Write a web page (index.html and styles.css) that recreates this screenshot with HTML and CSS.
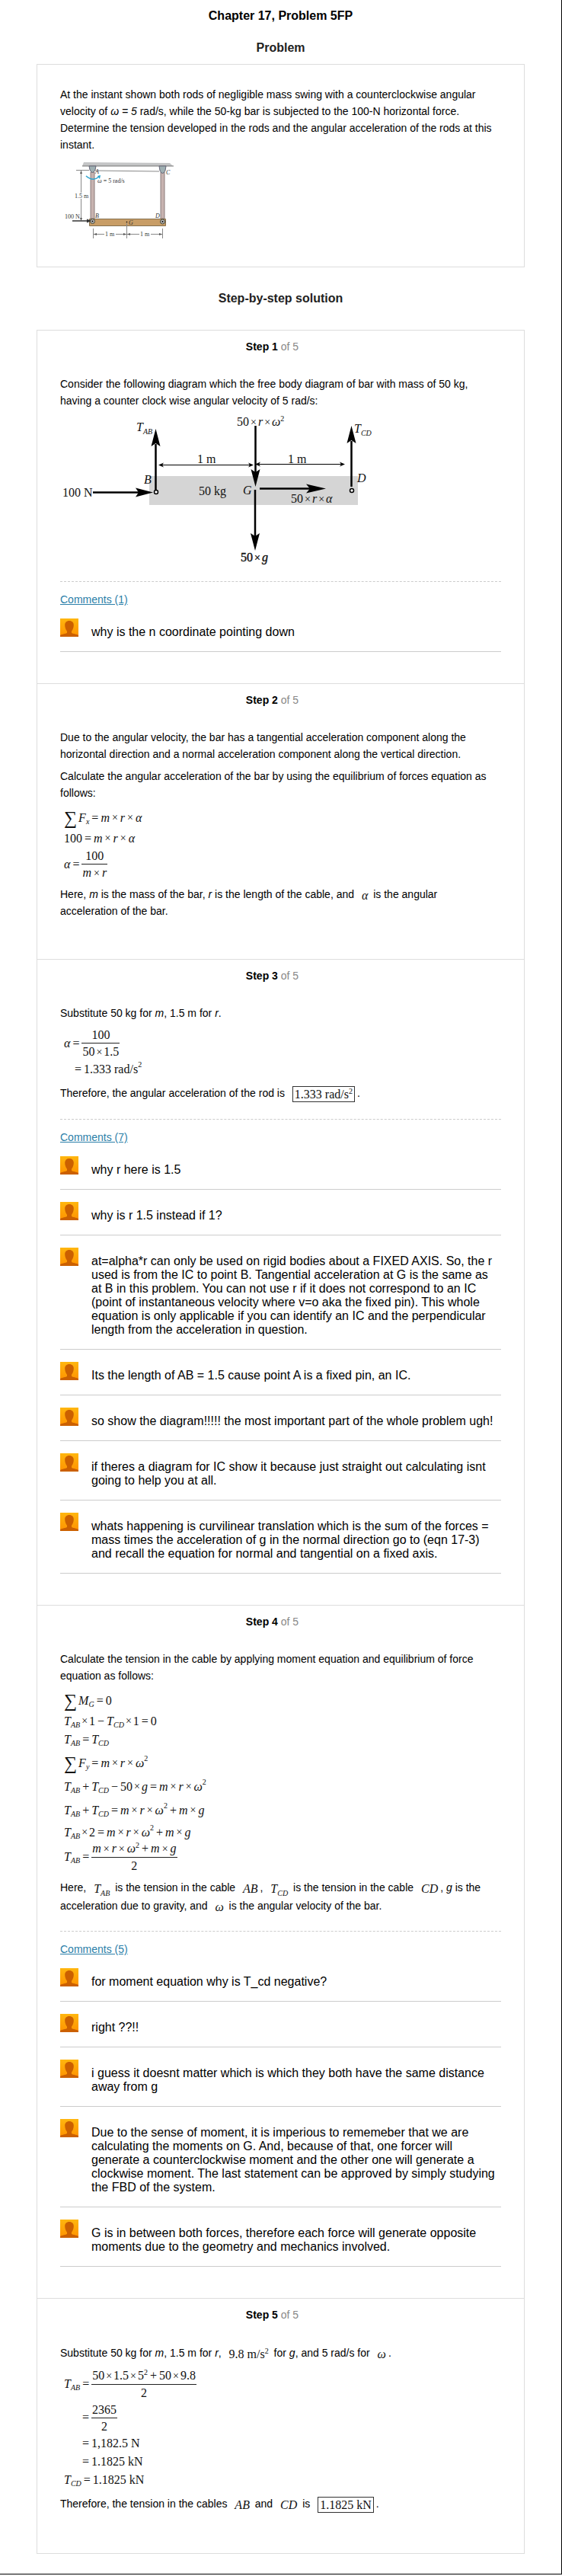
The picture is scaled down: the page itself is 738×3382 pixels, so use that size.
FILE: index.html
```html
<!DOCTYPE html>
<html lang="en">
<head>
<meta charset="utf-8">
<title>Chapter 17, Problem 5FP</title>
<link rel="stylesheet" href="styles.css">
</head>
<body>
<svg class="defs" aria-hidden="true">
  <defs>
    <linearGradient id="amber" x1="0" y1="0" x2="0" y2="1">
      <stop offset="0" stop-color="#ffb60f"/><stop offset="1" stop-color="#ff9200"/>
    </linearGradient>
    <symbol id="avatar" viewBox="0 0 24 24">
      <rect width="24" height="24" fill="url(#amber)"/>
      <path d="M12 3c3.6 0 5.8 2.200 5.800 5.800 0 3.200-1.300 6.200-2.800 7.900v2.200c1.300 1 6.500 1.600 9 3.100v2H0v-2c2.500-1.500 7.700-2.100 9-3.100v-2.200C7.500 15 6.200 12 6.200 8.800 6.200 5.200 8.400 3 12 3z" fill="#cb6000"/>
    </symbol>
  </defs>
</svg>
<main class="page">
  <h1 class="title">Chapter 17, Problem 5FP</h1>
  <h2 class="heading">Problem</h2>
  <section class="card problem">
    <p class="text">At the instant shown both rods of negligible mass swing with a counterclockwise angular velocity of <i>ω = 5</i> rad/s, while the 50-kg bar is subjected to the 100-N horizontal force. Determine the tension developed in the rods and the angular acceleration of the rods at this instant.</p>
    <svg class="figure" width="155" height="112" viewBox="79 208 155 112" role="img" aria-label="Bar BD hung from rods AB and CD">
      <path d="M110 213l113 1 4 4H108z" fill="#c4c5c6"/>
      <path d="M108 218h120" stroke="#777" stroke-width="1"/>
      <path d="M100 223.500h17M125 224l84 1" stroke="#888" fill="none"/>
      <path d="M119 226h5v61h-5zM211 226h5v61h-5z" fill="#c7b3b0" stroke="#8b7c7c"/>
      <path d="M117 218h9l-1 5q-3.500 7-7 0zM209 218h9l-1 6q-3.500 7-7 0z" fill="#9fb0b3" stroke="#667"/>
      <path d="M117.500 287.500h100v9h-100z" fill="#c89d66" stroke="#85704f"/>
      <circle cx="121.500" cy="290.500" r="3" fill="#bbb" stroke="#443"/><circle cx="121.500" cy="290.500" r="1"/>
      <circle cx="213.500" cy="291" r="3" fill="#bbb" stroke="#443"/><circle cx="213.500" cy="291" r="1"/>
      <path d="M113 231q9 8 17 1" stroke="#2ba3cf" stroke-width="1.500" fill="none"/>
      <path d="M128 231l4-1-1 5z" fill="#2ba3cf"/>
      <path d="M106.500 224v29M106.500 261v28M122.500 300v13M166.500 293v20M213.500 300v13M123 307.500h14M152 307.500h31M198 307.500h15" stroke="#888" fill="none"/>
      <path d="M106.500 224l-1.500 4h3zM106.500 290l-1.500-4h3zM123 307.500l4-1.500v3zM166 307.500l-4-1.500v3zM167 307.500l4-1.500v3zM213 307.500l-4-1.500v3z" fill="#555"/>
      <path d="M95 290h20" stroke="#333" stroke-width="1.500"/><path d="M114 287.500l6 2.500-6 2.500z" fill="#333"/>
      <circle cx="166.500" cy="291.500" r="0.800"/>
      <g class="tiny">
        <text x="98" y="260">1.5 m</text><text x="85" y="287">100 N</text>
        <text x="128" y="240"><tspan class="it">ω</tspan> = 5 rad/s</text>
        <text x="138" y="310">1 m</text><text x="184" y="310">1 m</text>
        <g class="it"><text x="125" y="228">A</text><text x="218" y="229">C</text><text x="125" y="286">B</text><text x="204" y="286">D</text><text x="169" y="295">G</text></g>
      </g>
    </svg>
  </section>

  <h2 class="heading solution">Step-by-step solution</h2>
  <div class="card steps">
    <section class="step">
      <h3 class="step-head">Step 1 <span class="of">of 5</span></h3>
      <p class="text">Consider the following diagram which the free body diagram of bar with mass of 50 kg, having a counter clock wise angular velocity of 5 rad/s:</p>
      <svg class="figure" width="430" height="198" viewBox="9 5 430 198" role="img" aria-label="Free body diagram of the bar">
        <path d="M126 86h274v38H126z" fill="#d5d5d5"/>
        <path d="M134.500 44v60M265.500 20v62M391.500 40v60M265 104v62" stroke="#000" stroke-width="2.500"/>
        <path d="M52 107.500h62M271 102.500h68" stroke="#000" stroke-width="2.500"/>
        <path d="M134.500 24l6 23-6-4-6 4zM391.500 20l6 23-6-4-6 4zM265.500 100l-6-23 6 4 6-4zM265 184l-6-23 6 4 6-4zM131 107.500l-23-6 4 6-4 6zM358 102.500l-26-6 5 6-5 6z"/>
        <path d="M140 71.500h121M268 70.500h113" stroke="#000"/>
        <path d="M138 71.500l7-3-2 3 2 3zM263 71.500l-7-3 2 3-2 3zM265 70.500l7-3-2 3 2 3zM383 70.500l-7-3 2 3-2 3z"/>
        <circle cx="135" cy="107" r="2.500" fill="#fff" stroke="#000" stroke-width="1.500"/>
        <circle cx="392" cy="105" r="2.500" fill="#fff" stroke="#000" stroke-width="1.500"/>
        <g class="label">
          <text x="12" y="113">100 N</text><text x="189" y="69">1 m</text><text x="308" y="69">1 m</text><text x="191" y="111">50 kg</text>
          <text x="241" y="20">50<tspan class="op" dx="2">×</tspan><tspan class="it" dx="2">r</tspan><tspan class="op" dx="2">×</tspan><tspan class="it" dx="2">ω</tspan><tspan class="idx" dy="-6">2</tspan></text>
          <text x="312" y="121">50<tspan class="op" dx="2">×</tspan><tspan class="it" dx="2">r</tspan><tspan class="op" dx="2">×</tspan><tspan class="it" dx="2">α</tspan></text>
          <text x="246" y="198" class="heavy">50<tspan class="op" dx="2">×</tspan><tspan class="it" dx="2">g</tspan></text>
          <g class="it"><text x="109" y="27">T<tspan class="idx" dy="4">AB</tspan></text><text x="395" y="29">T<tspan class="idx" dy="4">CD</tspan></text>
          <text x="119" y="96">B</text><text x="399" y="94">D</text><text x="249" y="110">G</text></g>
        </g>
      </svg>
      <div class="comments">
        <a class="comments-link" href="#c1">Comments (1)</a>
        <ul class="list" id="c1">
          <li class="comment"><svg class="avatar"><use href="#avatar"/></svg><p>why is the n coordinate pointing down</p></li>
        </ul>
      </div>
    </section>

    <section class="step">
      <h3 class="step-head">Step 2 <span class="of">of 5</span></h3>
      <p class="text">Due to the angular velocity, the bar has a tangential acceleration component along the horizontal direction and a normal acceleration component along the vertical direction.</p>
      <p class="text">Calculate the angular acceleration of the bar by using the equilibrium of forces equation as follows:</p>
      <div class="math">
        <div class="row h30"><span class="sum">∑</span><i>F</i><sub>x</sub><b>=</b><i>m</i><u>×</u><i>r</i><u>×</u><i>α</i></div>
        <div class="row">100<b>=</b><i>m</i><u>×</u><i>r</i><u>×</u><i>α</i></div>
        <div class="row h44"><i>α</i><b>=</b><span class="frac"><span>100</span><span><i>m</i><u>×</u><i>r</i></span></span></div>
      </div>
      <p class="text">Here, <i>m</i> is the mass of the bar, <i>r</i> is the length of the cable, and <span class="im"><i>α</i></span> is the angular<br>acceleration of the bar.</p>
    </section>

    <section class="step">
      <h3 class="step-head">Step 3 <span class="of">of 5</span></h3>
      <p class="text">Substitute 50 kg for <i>m</i>, 1.5 m for <i>r</i>.</p>
      <div class="math">
        <div class="row h44"><i>α</i><b>=</b><span class="frac"><span>100</span><span>50<u>×</u>1.5</span></span></div>
        <div class="row in1"><b>=</b>1.333 rad/s<sup>2</sup></div>
      </div>
      <p class="text answer">Therefore, the angular acceleration of the rod is <span class="im boxed">1.333 rad/s<sup>2</sup></span>.</p>
      <div class="comments">
        <a class="comments-link" href="#c3">Comments (7)</a>
        <ul class="list" id="c3">
          <li class="comment"><svg class="avatar"><use href="#avatar"/></svg><p>why r here is 1.5</p></li>
          <li class="comment"><svg class="avatar"><use href="#avatar"/></svg><p>why is r 1.5 instead if 1?</p></li>
          <li class="comment"><svg class="avatar"><use href="#avatar"/></svg><p>at=alpha*r can only be used on rigid bodies about a FIXED AXIS. So, the r used is from the IC to point B. Tangential acceleration at G is the same as at B in this problem. You can not use r if it does not correspond to an IC (point of instantaneous velocity where v=o aka the fixed pin). This whole equation is only applicable if you can identify an IC and the perpendicular length from the acceleration in question.</p></li>
          <li class="comment"><svg class="avatar"><use href="#avatar"/></svg><p>Its the length of AB = 1.5 cause point A is a fixed pin, an IC.</p></li>
          <li class="comment"><svg class="avatar"><use href="#avatar"/></svg><p>so show the diagram!!!!! the most important part of the whole problem ugh!</p></li>
          <li class="comment"><svg class="avatar"><use href="#avatar"/></svg><p>if theres a diagram for IC show it because just straight out calculating isnt going to help you at all.</p></li>
          <li class="comment"><svg class="avatar"><use href="#avatar"/></svg><p>whats happening is curvilinear translation which is the sum of the forces = mass times the acceleration of g in the normal direction go to (eqn 17-3) and recall the equation for normal and tangential on a fixed axis.</p></li>
        </ul>
      </div>
    </section>

    <section class="step">
      <h3 class="step-head">Step 4 <span class="of">of 5</span></h3>
      <p class="text">Calculate the tension in the cable by applying moment equation and equilibrium of force equation as follows:</p>
      <div class="math">
        <div class="row h30"><span class="sum">∑</span><i>M</i><sub>G</sub><b>=</b>0</div>
        <div class="row"><i>T</i><sub>AB</sub><u>×</u>1<b>−</b><i>T</i><sub>CD</sub><u>×</u>1<b>=</b>0</div>
        <div class="row"><i>T</i><sub>AB</sub><b>=</b><i>T</i><sub>CD</sub></div>
        <div class="row h38"><span class="sum">∑</span><i>F</i><sub>y</sub><b>=</b><i>m</i><u>×</u><i>r</i><u>×</u><i>ω</i><sup>2</sup></div>
        <div class="row"><i>T</i><sub>AB</sub><b>+</b><i>T</i><sub>CD</sub><b>−</b>50<u>×</u><i>g</i><b>=</b><i>m</i><u>×</u><i>r</i><u>×</u><i>ω</i><sup>2</sup></div>
        <div class="row h38"><i>T</i><sub>AB</sub><b>+</b><i>T</i><sub>CD</sub><b>=</b><i>m</i><u>×</u><i>r</i><u>×</u><i>ω</i><sup>2</sup><b>+</b><i>m</i><u>×</u><i>g</i></div>
        <div class="row h20"><i>T</i><sub>AB</sub><u>×</u>2<b>=</b><i>m</i><u>×</u><i>r</i><u>×</u><i>ω</i><sup>2</sup><b>+</b><i>m</i><u>×</u><i>g</i></div>
        <div class="row h44"><i>T</i><sub>AB</sub><b>=</b><span class="frac"><span><i>m</i><u>×</u><i>r</i><u>×</u><i>ω</i><sup>2</sup><b>+</b><i>m</i><u>×</u><i>g</i></span><span>2</span></span></div>
      </div>
      <p class="text loose">Here, <span class="im"><i>T</i><sub>AB</sub></span> is the tension in the cable <span class="im"><i>AB</i></span>, <span class="im"><i>T</i><sub>CD</sub></span> is the tension in the cable <span class="im"><i>CD</i></span>, <i>g</i> is the acceleration due to gravity, and <span class="im"><i>ω</i></span> is the angular velocity of the bar.</p>
      <div class="comments">
        <a class="comments-link" href="#c4">Comments (5)</a>
        <ul class="list" id="c4">
          <li class="comment"><svg class="avatar"><use href="#avatar"/></svg><p>for moment equation why is T_cd negative?</p></li>
          <li class="comment"><svg class="avatar"><use href="#avatar"/></svg><p>right ??!!</p></li>
          <li class="comment"><svg class="avatar"><use href="#avatar"/></svg><p>i guess it doesnt matter which is which they both have the same distance away from g</p></li>
          <li class="comment"><svg class="avatar"><use href="#avatar"/></svg><p>Due to the sense of moment, it is imperious to rememeber that we are calculating the moments on G. And, because of that, one forcer will generate a counterclockwise moment and the other one will generate a clockwise moment. The last statement can be approved by simply studying the FBD of the system.</p></li>
          <li class="comment"><svg class="avatar"><use href="#avatar"/></svg><p>G is in between both forces, therefore each force will generate opposite moments due to the geometry and mechanics involved.</p></li>
        </ul>
      </div>
    </section>

    <section class="step">
      <h3 class="step-head">Step 5 <span class="of">of 5</span></h3>
      <p class="text loose">Substitute 50 kg for <i>m</i>, 1.5 m for <i>r</i>, <span class="im">9.8 m/s<sup>2</sup></span> for <i>g</i>, and 5 rad/s for <span class="im"><i>ω</i></span>.</p>
      <div class="math">
        <div class="row h44"><i>T</i><sub>AB</sub><b>=</b><span class="frac"><span>50<u>×</u>1.5<u>×</u>5<sup>2</sup><b>+</b>50<u>×</u>9.8</span><span>2</span></span></div>
        <div class="row h44 in2"><b>=</b><span class="frac"><span>2365</span><span>2</span></span></div>
        <div class="row in2"><b>=</b>1,182.5 N</div>
        <div class="row in2"><b>=</b>1.1825 kN</div>
        <div class="row"><i>T</i><sub>CD</sub><b>=</b>1.1825 kN</div>
      </div>
      <p class="text answer">Therefore, the tension in the cables <span class="im"><i>AB</i></span> and <span class="im"><i>CD</i></span> is <span class="im boxed">1.1825 kN</span>.</p>
    </section>
  </div>
</main>
</body>
</html>
```

FILE: styles.css
```css
* { box-sizing: border-box; }

body {
  margin: 0;
  background: #fff;
  color: #000;
  font-family: "Liberation Sans", Arial, sans-serif;
  font-size: 14px;
}

.defs { display: block; width: 0; height: 0; }

.page {
  padding: 12px 48px 26px;
  border-right: 1px solid #000;
  border-bottom: 1px solid #000;
}

.title,
.heading {
  margin: 0;
  font-size: 16px;
  line-height: 18px;
  text-align: center;
}

.heading { margin: 24px 0 12px; color: #222; }
.solution { margin: 32px 0; }

.card { border: 1px solid #ddd; }
.problem { padding: 28px 30px 30px; }

.text { margin: 0 0 7px; line-height: 22px; }
.loose { line-height: 24px; }
.answer { line-height: 26px; }
.figure { display: block; }

.tiny { font-family: "Liberation Serif", serif; font-size: 8px; fill: #333; }
.label { font-family: "Liberation Serif", serif; font-size: 16px; fill: #111; }
.it { font-style: italic; }
.idx { font-size: 10px; }
.op { font-size: 14px; }
.heavy { stroke: #111; stroke-width: 0.4px; }

.step { padding: 13px 30px 45px; }
.step + .step { border-top: 1px solid #ddd; }

.step-head {
  margin: 0 22px 30px 0;
  font-size: 14px;
  line-height: 16px;
  text-align: center;
}

.of { color: #888; font-weight: 400; }

/* Equations */
.math,
.im {
  font-family: "Liberation Serif", "Times New Roman", serif;
  font-size: 16px;
  color: #111;
}

.math { margin: 0 0 6px; padding-left: 5px; }
.row { display: flex; align-items: center; height: 24px; line-height: 18px; white-space: pre; }
.h20 { height: 20px; }
.h30 { height: 30px; }
.h38 { height: 38px; }
.h44 { height: 44px; }
.in1 { padding-left: 11px; }
.in2 { padding-left: 21px; }

.math b { margin: 0 3px; font-weight: 400; }
.math u { margin: 0 2px; font-size: 14px; text-decoration: none; }
.math i + u { margin: 0 3px; }
.sum { margin-right: 2px; font-size: 24px; line-height: 24px; }

sub, sup { font-size: 10px; line-height: 0; }
sub { font-style: italic; }
.row > sub { padding-top: 10px; }
.row > sup { padding-bottom: 12px; }

.frac { display: inline-flex; flex-direction: column; text-align: center; }
.frac > span { padding: 0 1px; line-height: 21px; }
.frac > span + span { border-top: 1px solid #222; }

.im { margin: 0 3px 0 6px; line-height: 18px; vertical-align: -2px; }
.boxed { display: inline-block; padding: 1px 2px 0; border: 1px solid #333; }

/* Comments */
.comments { margin-top: 21px; border-top: 1px dashed #ccc; padding-top: 14px; }
.comments-link { display: block; width: max-content; color: #2a7ea8; line-height: 18px; }
.list { margin: 0; padding: 0; list-style: none; }

.comment {
  display: flex;
  gap: 17px;
  padding: 16px 0;
  border-bottom: 1px solid #ccc;
  font-size: 16px;
  line-height: 18px;
}

.comment p { margin: 9px 0 0; }
.avatar { flex: none; width: 24px; height: 24px; }
.step:has(.comments) { padding-bottom: 41px; }
```
